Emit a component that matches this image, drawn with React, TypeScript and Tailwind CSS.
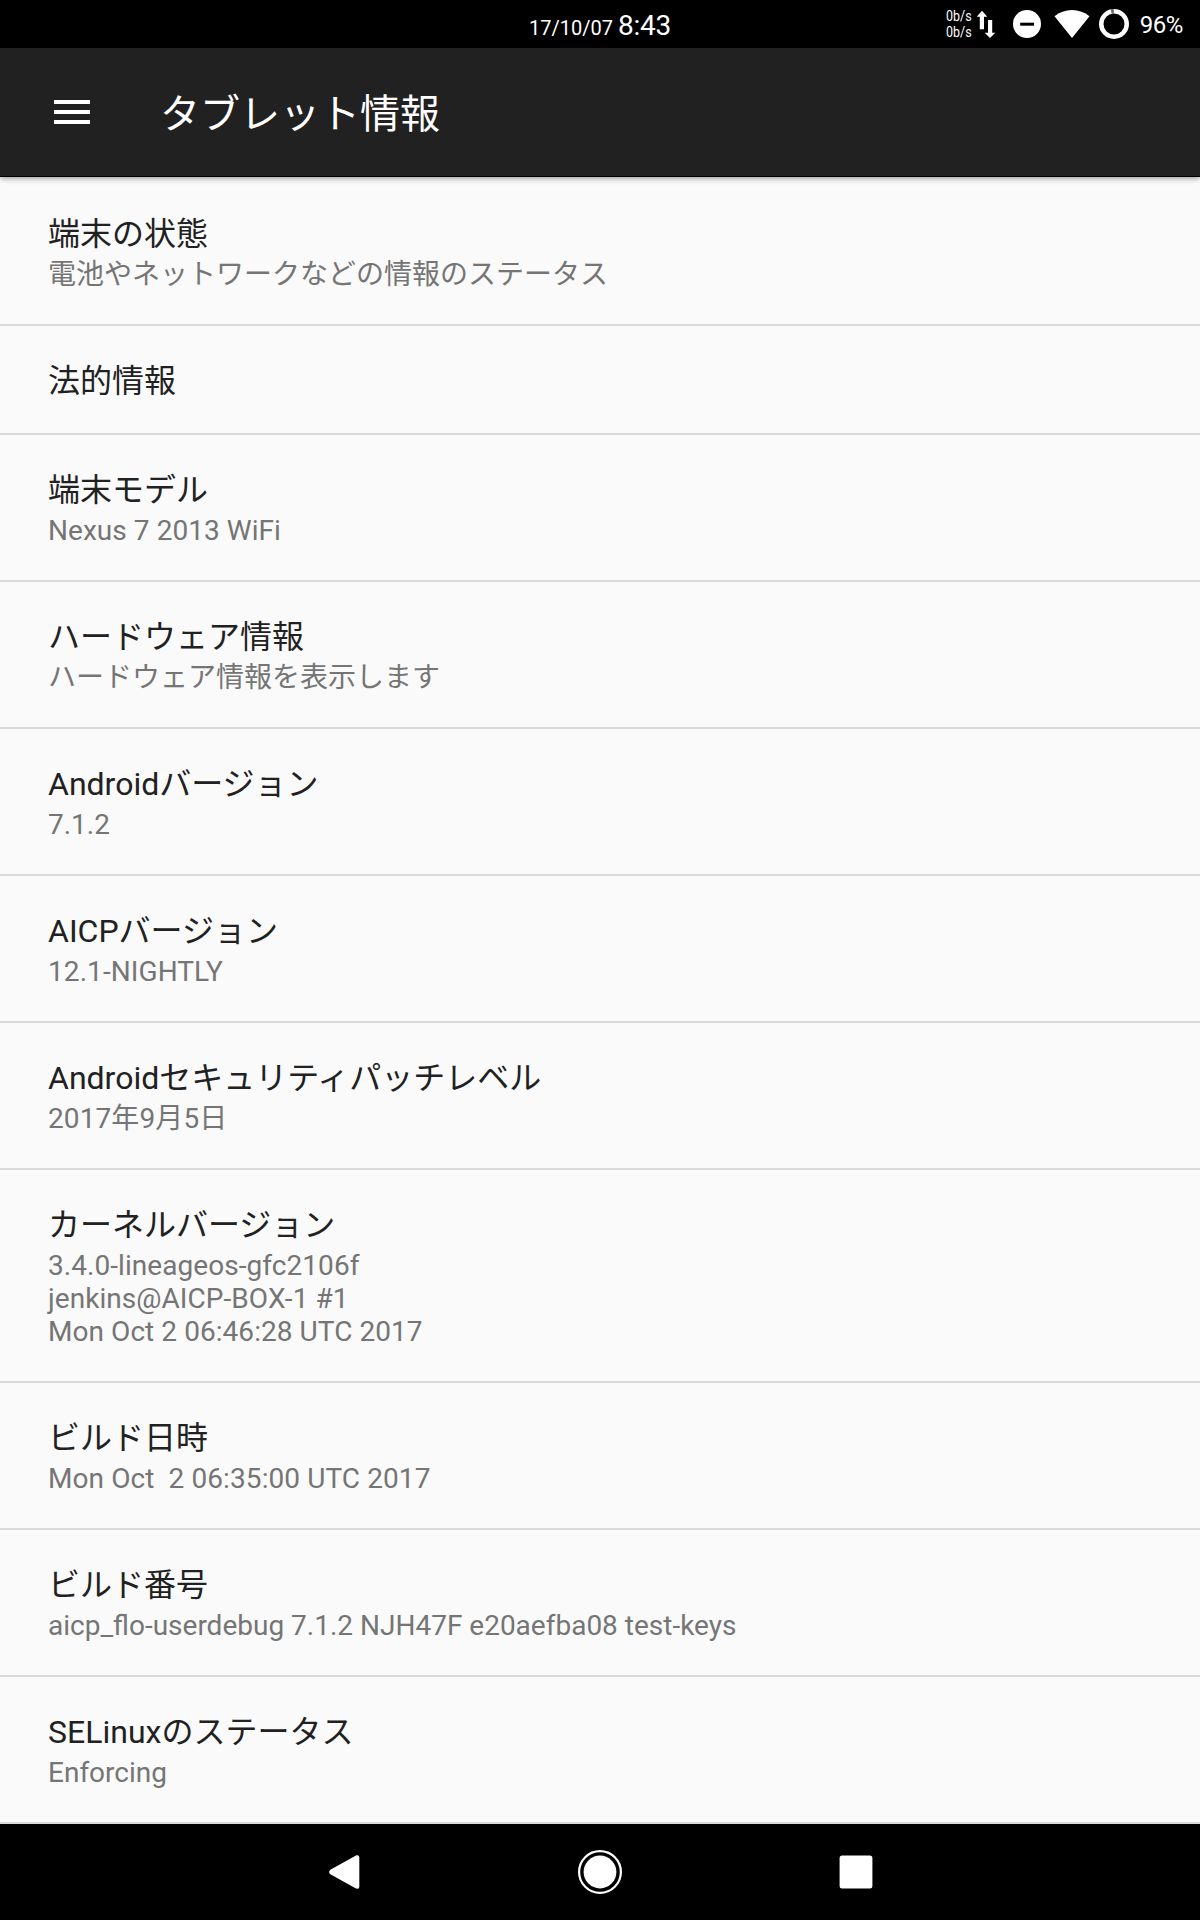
import React from 'react';

interface InfoItem {
  title: string;
  summary?: string[];
  tracking?: string;
}

const items: InfoItem[] = [
  { title: '端末の状態', summary: ['電池やネットワークなどの情報のステータス'] },
  { title: '法的情報' },
  { title: '端末モデル', summary: ['Nexus 7 2013 WiFi'], tracking: 'tracking-[0.05px]' },
  { title: 'ハードウェア情報', summary: ['ハードウェア情報を表示します'] },
  { title: 'Androidバージョン', summary: ['7.1.2'] },
  { title: 'AICPバージョン', summary: ['12.1-NIGHTLY'], tracking: 'tracking-[0.08px]' },
  { title: 'Androidセキュリティパッチレベル', summary: ['2017年9月5日'], tracking: 'tracking-[0.1px]' },
  {
    title: 'カーネルバージョン',
    summary: ['3.4.0-lineageos-gfc2106f', 'jenkins@AICP-BOX-1 #1', 'Mon Oct 2 06:46:28 UTC 2017'],
    tracking: 'tracking-[0.06px]',
  },
  { title: 'ビルド日時', summary: ['Mon Oct  2 06:35:00 UTC 2017'], tracking: 'tracking-[0.09px]' },
  { title: 'ビルド番号', summary: ['aicp_flo-userdebug 7.1.2 NJH47F e20aefba08 test-keys'] },
  { title: 'SELinuxのステータス', summary: ['Enforcing'] },
];

const StatusBar: React.FC = () => (
  <div className="grid h-12 grid-cols-3 bg-black text-white">
    <div />
    <div className="flex items-baseline justify-center gap-[5px] pt-2.5 leading-8">
      <span className="text-[20px]">17/10/07</span>
      <span className="text-[28px] tracking-[-0.2px]">8:43</span>
    </div>
    <div className="flex items-center justify-end pr-[17px]">
      <div className="w-[30px] origin-left scale-x-[0.89] text-[14px] leading-4">
        <div>0b/s</div>
        <div>0b/s</div>
      </div>
      {/* network traffic */}
      <svg className="h-12 w-5" viewBox="0 0 20 48" fill="currentColor">
        <path d="M6 10.7L11.3 16.7H8V29.2H3.8V16.7H0.7Z" />
        <path d="M12 20H16.2V32.7H19.3L14 38L8.7 32.7H12Z" />
      </svg>
      {/* do not disturb */}
      <svg className="ml-[17px] h-7 w-7" viewBox="0 0 28 28">
        <circle cx="14" cy="14" r="14" fill="white" />
        <rect x="7.2" y="12.7" width="13.8" height="3" fill="black" />
      </svg>
      {/* wifi */}
      <svg className="ml-[13px] h-7 w-9" viewBox="0 0 36 28" fill="currentColor">
        <path d="M18 28L0.5 6.2C5.3 2.3 11.3 0 18 0S30.7 2.3 35.5 6.2Z" />
      </svg>
      {/* battery ring */}
      <svg className="ml-[9px] h-[30px] w-[30px]" viewBox="0 0 30 30" fill="none" strokeWidth="4.5">
        <circle cx="15" cy="15" r="12.75" stroke="white" />
        <path d="M12.2 2.56A12.75 12.75 0 0 1 14.8 2.25" stroke="#666" />
      </svg>
      <span className="ml-[11px] pt-0.5 text-[24px] leading-8 tracking-[-0.4px]">96%</span>
    </div>
  </div>
);

const AppBar: React.FC = () => (
  <header className="relative z-10 flex h-[129px] items-center border-b border-black bg-[#212121] pl-[54px] text-white shadow-[0_1px_6px_rgba(0,0,0,0.45)]">
    <button className="flex w-9 flex-col gap-1.5">
      <span className="h-1 w-full bg-white" />
      <span className="h-1 w-full bg-white" />
      <span className="h-1 w-full bg-white" />
    </button>
    <h1 className="ml-[70px] pt-1.5 text-[40px] leading-[48px]">タブレット情報</h1>
  </header>
);

const InfoRow: React.FC<{ item: InfoItem }> = ({ item }) => (
  <li className="border-b-2 border-[#dadada] px-12 pt-9 pb-[33px]">
    <h2 className="text-[32px] leading-[38px] text-[#212121]">{item.title}</h2>
    {item.summary && (
      <div className={`mt-[5px] text-[28px] leading-[33px] whitespace-pre text-[#757575] ${item.tracking ?? ''}`}>
        {item.summary.map(line => (
          <p key={line}>{line}</p>
        ))}
      </div>
    )}
  </li>
);

const NavBar: React.FC = () => (
  <nav className="flex h-24 items-center justify-center gap-52 bg-black text-white">
    <button>
      <svg className="h-12 w-12" viewBox="0 0 48 48" fill="currentColor">
        <path d="M35.5 7.7C37.5 6.6 39.3 7.4 39.3 9.5V38.5C39.3 40.6 37.5 41.4 35.5 40.3L10.8 26.6C8.5 25.2 8.5 22.8 10.8 21.4Z" />
      </svg>
    </button>
    <button>
      <svg className="h-12 w-12" viewBox="0 0 48 48">
        <circle cx="24" cy="24" r="20.9" fill="none" stroke="white" strokeWidth="2.2" />
        <circle cx="24" cy="24" r="16.4" fill="white" />
      </svg>
    </button>
    <button>
      <svg className="h-12 w-12" viewBox="0 0 48 48" fill="currentColor">
        <rect x="7.6" y="7.4" width="32.8" height="33.2" rx="2.5" />
      </svg>
    </button>
  </nav>
);

const App: React.FC = () => {
  return (
    <div
      lang="ja"
      className="flex h-[1920px] w-[1200px] flex-col overflow-hidden bg-[#fafafa] font-[Roboto,'Noto_Sans_CJK_JP',sans-serif]"
    >
      <StatusBar />
      <AppBar />
      <ul className="flex-1 pt-0.5">
        {items.map(item => (
          <InfoRow key={item.title} item={item} />
        ))}
      </ul>
      <NavBar />
    </div>
  );
};

export default App;
